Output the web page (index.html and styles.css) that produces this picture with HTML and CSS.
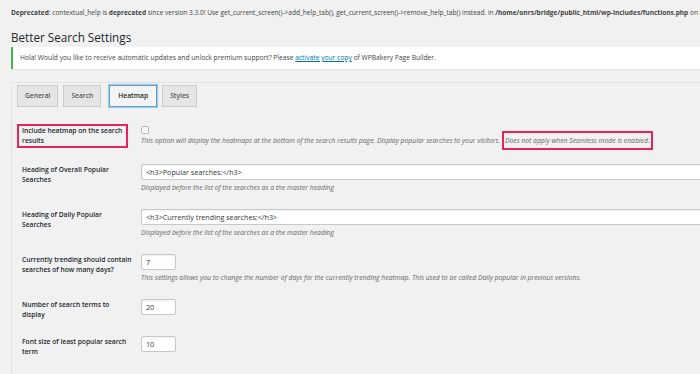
FILE: index.html
```html
<!DOCTYPE html>
<html lang="en">
<head>
<meta charset="utf-8">
<title>Better Search Settings</title>
<link rel="stylesheet" href="styles.css">
</head>
<body>
    <div class="deprecated"><b>Deprecated</b>: contextual_help is <b>deprecated</b> since version 3.3.0! Use get_current_screen()-&gt;add_help_tab(), get_current_screen()-&gt;remove_help_tab() instead. in <b>/home/onrs/bridge/public_html/wp-includes/functions.php</b> on li</div>
    <div class="wrap">
        <h1>Better Search Settings</h1>
        <div class="notice">Hola! Would you like to receive automatic updates and unlock premium support? Please <a href="#">activate your copy</a> of WPBakery Page Builder.</div>

        <div class="panel">
            <div class="tabs">
                <a class="tab" href="#">General</a>
                <a class="tab" href="#">Search</a>
                <a class="tab active" href="#">Heatmap</a>
                <a class="tab" href="#">Styles</a>
            </div>

            <form class="form-table">
                <div class="row">
                    <label class="th"><span class="mark">Include heatmap on the search<br>results</span></label>
                    <div class="td">
                        <input type="checkbox" class="check">
                        <p class="description first">This option will display the heatmaps at the bottom of the search results page. Display popular searches to your visitors. <span class="mark-inline">Does not apply when Seamless mode is enabled.</span></p>
                    </div>
                </div>
                <div class="row">
                    <label class="th">Heading of Overall Popular<br>Searches</label>
                    <div class="td">
                        <input type="text" class="large-text" value="<h3>Popular searches:</h3>">
                        <p class="description">Displayed before the list of the searches as a the master heading</p>
                    </div>
                </div>
                <div class="row">
                    <label class="th">Heading of Daily Popular<br>Searches</label>
                    <div class="td">
                        <input type="text" class="large-text" value="<h3>Currently trending searches:</h3>">
                        <p class="description">Displayed before the list of the searches as a the master heading</p>
                    </div>
                </div>
                <div class="row">
                    <label class="th">Currently trending should contain<br>searches of how many days?</label>
                    <div class="td">
                        <input type="text" class="small-text" value="7">
                        <p class="description">This settings allows you to change the number of days for the currently trending heatmap. This used to be called Daily popular in previous versions.</p>
                    </div>
                </div>
                <div class="row">
                    <label class="th">Number of search terms to<br>display</label>
                    <div class="td">
                        <input type="text" class="small-text" value="20">
                    </div>
                </div>
                <div class="row">
                    <label class="th">Font size of least popular search<br>term</label>
                    <div class="td">
                        <input type="text" class="small-text" value="10">
                    </div>
                </div>
            </form>
        </div>
    </div>
</body>
</html>
```

FILE: styles.css
```css
body {
    margin: 0;
    background-color: #f1f1f1;
    color: #444;
    font-family: "Open Sans", "Noto Sans", sans-serif;
    font-size: 7px;
    overflow: hidden;
}
.deprecated {
    padding: 8px 0 0 11px;
    line-height: 10px;
    font-size: 6.55px;
    white-space: nowrap;
    overflow: hidden;
}
.deprecated b {
    font-weight: 700;
}
.wrap {
    margin-left: 11px;
    width: 760px;
}
h1 {
    margin: 11px 0 0 0;
    font-size: 11.7px;
    line-height: 16px;
    font-weight: 400;
    color: #23282d;
}
.notice {
    margin-top: 2px;
    padding: 6px 8px 6px 7px;
    line-height: 10px;
    font-size: 6.7px;
    background: #fff;
    border-left: 2px solid #46b450;
    box-shadow: 0 1px 1px rgba(0,0,0,.06);
}
.notice a {
    color: #0073aa;
}
.panel {
    margin-top: 13px;
    border-top: 1px solid #e3e3e3;
    border-left: 1px solid #e3e3e3;
    padding: 2px 0 40px 5px;
}
.tabs {
    display: flex;
    gap: 5px;
}
.tab {
    display: block;
    padding: 5px 7px;
    line-height: 10px;
    border: 1px solid #ccc;
    background: #e5e5e5;
    color: #555;
    font-weight: 600;
    font-size: 6.7px;
    text-decoration: none;
}
.tab.active {
    background: #f4f4f4;
    color: #23282d;
    border-color: #5b9dd9;
    box-shadow: 0 0 1px 1px rgba(30,140,190,.35);
    margin-left: 3px;
    padding: 5px 8px;
}
.form-table {
    margin: 9px 0 0 0;
    padding-left: 5px;
}
.row {
    display: flex;
    align-items: flex-start;
    padding: 8px 0;
}
.th {
    width: 111px;
    padding: 1px 8px 0 0;
    line-height: 10px;
    font-size: 6.7px;
    font-weight: 600;
    color: #23282d;
    white-space: nowrap;
    flex-shrink: 0;
}
.mark {
    display: block;
    margin: -1px 5px 0 -5px;
    padding: 0 0 0 3px;
    border: 2px solid #e5245c;
}
.td {
    flex: 1;
}
.check {
    appearance: none;
    display: block;
    margin: 2px 0 0 0;
    width: 8px;
    height: 8px;
    border: 1px solid #b4b9be;
    border-radius: 2px;
    background: #fbfbfb;
}
.description {
    margin: 3px 0 0 0;
    line-height: 10px;
    font-size: 6.8px;
    font-style: italic;
    color: #666;
    white-space: nowrap;
}
.description.first {
    margin-top: 2px;
}
.mark-inline {
    padding: 3px 1px;
    border: 2px solid #e5245c;
}
input[type=text] {
    display: block;
    box-sizing: border-box;
    height: 16px;
    margin: 0;
    padding: 0 4px;
    font-family: "Open Sans", "Noto Sans", sans-serif;
    font-size: 7.2px;
    color: #32373c;
    background: #fff;
    border: 1px solid #c8c8c8;
    border-radius: 2px;
    box-shadow: inset 0 1px 2px rgba(0,0,0,.07);
}
.large-text {
    width: 600px;
}
.small-text {
    width: 35px;
}
```
